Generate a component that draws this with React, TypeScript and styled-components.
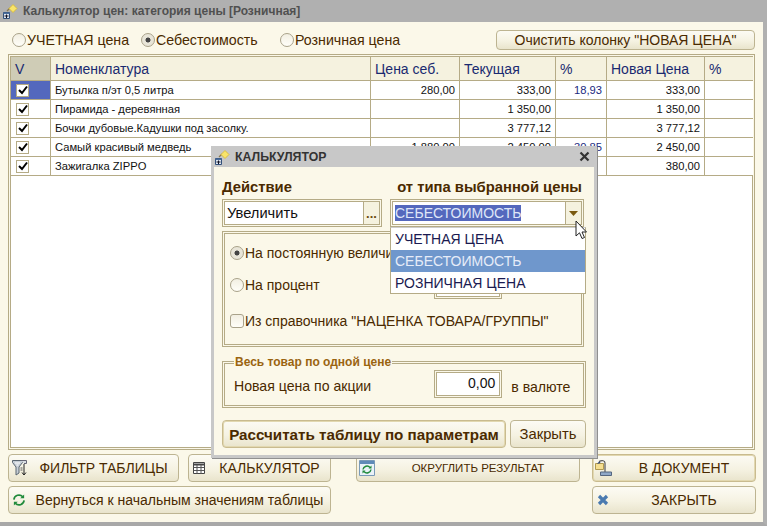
import React from 'react';
import styled, { createGlobalStyle } from 'styled-components';

const Global = createGlobalStyle`
  html, body { margin: 0; padding: 0; background: #fbf8e9; }
  body { font-family: "Liberation Sans", Arial, sans-serif; font-size: 14px; color: #4a2a00; }
  * { box-sizing: border-box; }
`;

const Win = styled.div`
  position: relative;
  width: 767px;
  height: 526px;
  display: flex;
  flex-direction: column;
  background: #fbf8e9;
  border-right: 4px solid #b0b0b0;
  border-bottom: 4px solid #a8a8a8;
  overflow: hidden;
`;
const TitleBar = styled.div`
  height: 22px;
  flex: none;
  background: #b0b0b0;
  display: flex;
  align-items: center;
  gap: 2px;
  padding-left: 1px;
  margin-right: -4px;
  font-weight: bold;
  font-size: 12px;
  color: #505050;
`;
const TopRow = styled.div`
  height: 32px;
  flex: none;
  display: flex;
  align-items: center;
  padding: 3px 8px 0 12px;
`;
const RadioItem = styled.label<{ $w: number }>`
  width: ${(p) => p.$w}px;
  display: flex;
  align-items: center;
  font-size: 14.2px;
  color: #4a2a00;
  white-space: nowrap;
`;
const Circle = styled.span<{ $on?: boolean }>`
  width: 14px;
  height: 14px;
  flex: none;
  margin-right: 1px;
  border-radius: 50%;
  border: 1px solid #a9a28a;
  background: ${(p) => (p.$on
    ? 'radial-gradient(circle, #444 0 2.2px, #e8e5d8 2.8px)'
    : 'linear-gradient(#f2efe2, #fffef8)')};
`;
const Btn = styled.button<{ $w?: number; $h?: number; $size?: number; $bold?: boolean; $hot?: boolean }>`
  width: ${(p) => (p.$w ? `${p.$w}px` : 'auto')};
  height: ${(p) => p.$h ?? 28}px;
  flex: none;
  padding: 0;
  display: flex;
  align-items: center;
  justify-content: center;
  border-radius: 4px;
  border: 1px solid ${(p) => (p.$hot ? '#c9bb8f' : '#bdb491')};
  box-shadow: ${(p) => (p.$hot ? 'inset 0 0 0 1px #e2d8b0' : 'none')};
  background: linear-gradient(#fcfbf4 0%, #f5f2e2 55%, #e9e4cc 100%);
  font-family: inherit;
  font-size: ${(p) => p.$size ?? 14}px;
  font-weight: ${(p) => (p.$bold ? 'bold' : 'normal')};
  color: #4a2a00;
  white-space: nowrap;
`;
const ClearBtn = styled(Btn)`
  margin-left: auto;
  width: 259px;
`;
const TableBox = styled.div`
  flex: 1;
  margin: 0 8px;
  border: 1px solid #b5ab86;
  padding: 1px;
  min-height: 0;
`;
const TableInner = styled.div`
  height: 100%;
  background: #fff;
  border: 1px solid #b5ab86;
`;
const Row = styled.div<{ $head?: boolean }>`
  display: grid;
  grid-template-columns: 40px 320px 89px 96px 51px 98px 48px;
  height: ${(p) => (p.$head ? 24 : 19)}px;
  border-bottom: 1px solid #b5ab86;
`;
const Head = styled.div<{ $dark?: boolean }>`
  background: ${(p) => (p.$dark ? '#cfccb6' : '#f5f2df')};
  border-right: 1px solid #b5ab86;
  color: #1a2a70;
  font-size: 14px;
  display: flex;
  align-items: center;
  padding-left: 4px;
  &:last-child { border-right: none; }
`;
const Cell = styled.div<{ $right?: boolean; $blue?: boolean; $sel?: boolean }>`
  border-right: 1px solid #b5ab86;
  font-size: 11.2px;
  color: ${(p) => (p.$blue ? '#1a2a80' : '#111')};
  background: ${(p) => (p.$sel ? '#5468bd' : '#fff')};
  display: flex;
  align-items: center;
  justify-content: ${(p) => (p.$right ? 'flex-end' : 'flex-start')};
  padding: 0 4px;
  white-space: nowrap;
  &:last-child { border-right: none; }
`;
const Check = styled.span`
  width: 13px;
  height: 13px;
  margin-left: 1px;
  background: #fff;
  border: 1px solid #b5ab86;
  display: inline-flex;
  align-items: center;
  justify-content: center;
  flex: none;
`;
const Footer = styled.div`
  flex: none;
  height: 72px;
  padding: 4px 0 0 8px;
  display: grid;
  grid-template-columns: 171px 9px 143px 25px 224px 12px 164px;
  grid-template-rows: 28px 28px;
  row-gap: 4px;
`;
const FootBtn = styled(Btn)<{ $col: string }>`
  grid-column: ${(p) => p.$col};
  width: 100%;
  justify-content: flex-start;
`;
const FootIcon = styled.span`
  width: 18px;
  height: 20px;
  flex: none;
  margin-left: 1px;
  display: flex;
  align-items: center;
  justify-content: center;
`;
const FootLabel = styled.span<{ $size?: number }>`
  flex: 1;
  text-align: center;
  font-size: ${(p) => p.$size ?? 14}px;
  margin-left: 7px;
  padding-right: 6px;
`;

/* dialog */
const Dialog = styled.div`
  position: absolute;
  left: 211px;
  top: 146px;
  width: 386px;
  height: 312px;
  background: #fbf8e9;
  border: 3px solid #c8c8c8;
  border-top: none;
  box-shadow: 1px 1px 0 #909090;
  display: flex;
  flex-direction: column;
`;
const DlgTitle = styled.div`
  height: 21px;
  flex: none;
  margin: 0 -3px;
  padding: 0 7px 0 2px;
  background: #c8c8c8;
  display: flex;
  align-items: center;
  gap: 2px;
  font-weight: bold;
  font-size: 12.3px;
  color: #333;
`;
const Close = styled.span`
  margin-left: auto;
  display: flex;
`;
const DlgBody = styled.div`
  padding: 0 8px;
  flex: 1;
  display: flex;
  flex-direction: column;
  position: relative;
`;
const LabelRow = styled.div`
  height: 32px;
  flex: none;
  display: flex;
  justify-content: space-between;
  align-items: flex-end;
  padding: 0 4px 4px 0;
  font-weight: bold;
  font-size: 14.8px;
  color: #4a2a00;
`;
const FieldRow = styled.div`
  display: flex;
  gap: 8px;
  height: 28px;
  flex: none;
`;
const DoubleBox = styled.div<{ $w: number; $h?: number; $ml?: number }>`
  width: ${(p) => p.$w}px;
  height: ${(p) => (p.$h ? `${p.$h}px` : '100%')};
  margin-left: ${(p) => p.$ml ?? 0}px;
  flex: none;
  border: 1px solid #b5ab86;
  padding: 1px;
`;
const InputIn = styled.div`
  height: 100%;
  display: flex;
  align-items: center;
  border: 1px solid #b5ab86;
  background: #fff;
  font-size: 14px;
  color: #111;
`;
const InputText = styled.span<{ $sel?: boolean }>`
  margin-left: 2px;
  font-size: ${(p) => (p.$sel ? 14 : 14.7)}px;
  color: ${(p) => (p.$sel ? '#dfe6f8' : '#111')};
  background: ${(p) => (p.$sel ? '#5468bd' : 'transparent')};
  line-height: 16px;
`;
const EndBtn = styled.span`
  margin-left: auto;
  width: 16px;
  height: 100%;
  background: #f5f2df;
  border-left: 1px solid #b5ab86;
  display: flex;
  align-items: center;
  justify-content: center;
  color: #6a4a10;
  font-size: 13px;
  font-weight: bold;
`;
const Panel = styled.div`
  margin-top: 4px;
  height: 116px;
  flex: none;
  width: 362px;
  border: 1px solid #b5ab86;
  padding: 1px;
`;
const PanelIn = styled.div`
  height: 100%;
  border: 1px solid #b5ab86;
  padding: 9px 5px 0 5px;
  display: flex;
  flex-direction: column;
`;
const PanelRow = styled.div<{ $h: number }>`
  height: ${(p) => p.$h}px;
  flex: none;
  display: flex;
  align-items: center;
  font-size: 14px;
  color: #4a2a00;
  white-space: nowrap;
`;
const RadioLabel = styled.span`
  display: flex;
  align-items: center;
  flex: none;
`;
const RadioCol = styled(RadioLabel)`
  width: 204px;
`;
const Square = styled.span`
  width: 14px;
  height: 14px;
  flex: none;
  margin-right: 1px;
  border: 1px solid #a9a28a;
  border-radius: 3px;
  background: linear-gradient(#f2efe2, #fffef8);
`;
const Group = styled.fieldset`
  margin: 9px 0 0 0;
  padding: 0 5px 0 9px;
  width: 364px;
  height: 52px;
  flex: none;
  border: 3px double #b5ab86;
  display: flex;
`;
const Legend = styled.legend`
  padding: 0 1px;
  font-size: 12px;
  font-weight: bold;
  color: #9a6410;
  line-height: 13px;
`;
const GroupRow = styled.div`
  display: flex;
  align-items: center;
  width: 100%;
  height: 28px;
  margin-top: 1px;
  font-size: 14.1px;
  color: #4a2a00;
`;
const GroupLabel = styled.span`
  margin-top: 4px;
`;
const Currency = styled.span`
  margin: 6px 0 0 9px;
`;
const NumIn = styled(InputIn)`
  justify-content: flex-end;
  padding: 0 4px 3px 0;
`;
const DlgButtons = styled.div`
  margin-top: 12px;
  display: flex;
  gap: 4px;
`;
const Dropdown = styled.div`
  position: absolute;
  left: 176px;
  top: 60px;
  width: 196px;
  height: 67px;
  background: #fff;
  border: 1px solid #b5ab86;
  border-top-color: #ccc;
  font-size: 14px;
`;
const DropItem = styled.div<{ $sel?: boolean }>`
  height: 22px;
  display: flex;
  align-items: center;
  padding-left: 4px;
  color: ${(p) => (p.$sel ? '#e6ecf8' : '#1a1a50')};
  background: ${(p) => (p.$sel ? '#6f97cc' : 'transparent')};
`;
const Cursor = styled.svg`
  position: absolute;
  left: 361px;
  top: 53px;
`;

const FormIcon = () => (
  <svg width="20" height="20" viewBox="0 0 20 20">
    <path d="M2.500 11.500h6v6h-6z" fill="#dfe8f4" stroke="#33507a" />
    <path d="M2.500 11.500h6v1.500h-6z" fill="#4a6d9c" />
    <path d="M3.500 15h4M5.500 13.500v3.500" stroke="#112" />
    <path d="M6 10l3-3" stroke="#8a7a50" strokeWidth="1.200" />
    <path d="M12 3.500l4 4-4 4-4-4z" fill="#f8e46a" stroke="#d8b830" strokeWidth=".8" />
  </svg>
);
const Tick = () => (
  <svg width="10" height="10" viewBox="0 0 10 10">
    <path d="M1 5l3 3 5-6.500" fill="none" stroke="#000" strokeWidth="2" />
  </svg>
);
const Funnel = () => (
  <svg width="18" height="16" viewBox="-2 0 18 16">
    <path d="M.5.500h10v2L7 7v6l-3 2V7L.5 2.500z" fill="#c6ced6" stroke="#5a6670" />
    <path d="M3 3h5M4.500 5h2" stroke="#fff" />
    <path d="M9 .500h5.500v3H12" fill="#d8dde2" stroke="#667" />
    <path d="M12 4v11M10 12.500l2 2.500 2-2.500" fill="none" stroke="#222" />
    <path d="M8.500 8h2M8.500 10h2" stroke="#555" />
  </svg>
);
const Calc = () => (
  <svg width="12" height="12" viewBox="0 0 12 12">
    <path d="M.5.500h11v11H.5z" fill="#fff" stroke="#444" />
    <path d="M.5 2.500h11" stroke="#444" strokeWidth="2" />
    <path d="M.5 5.500h11M.5 8.500h11M4 3v9M8 3v9" stroke="#555" />
  </svg>
);
const Arrows = () => (
  <svg width="14" height="14" viewBox="0 0 15 15">
    <path d="M2 7a5.500 5.500 0 0 1 9.500-3" fill="none" stroke="#1f8a3a" strokeWidth="1.800" />
    <path d="M13 1.500v4.200H8.800z" fill="#1f8a3a" />
    <path d="M13 8a5.500 5.500 0 0 1-9.500 3" fill="none" stroke="#1f8a3a" strokeWidth="1.800" />
    <path d="M2 13.500V9.300h4.200z" fill="#1f8a3a" />
  </svg>
);
const RoundIcon = () => (
  <svg width="16" height="16" viewBox="0 0 16 16">
    <path d="M.5.500h15v15H.5z" fill="#eaf2f8" stroke="#7a9ab8" />
    <path d="M1 1h14v3H1z" fill="#5f8ab8" />
    <path d="M4 9.500a4 4 0 0 1 7-2M12 9.500a4 4 0 0 1-7 2" fill="none" stroke="#1f8a3a" strokeWidth="1.500" />
    <path d="M12.500 5.500v3h-3zM3.500 13.500v-3h3z" fill="#1f8a3a" />
  </svg>
);
const DocIcon = () => (
  <svg width="17" height="16" viewBox="0 0 17 16">
    <path d="M.5 3.500h8v6h-8z" fill="#f6df90" stroke="#b09a50" />
    <path d="M2 4l2.500-3 1 2z" fill="#304880" />
    <path d="M4 1.500C7 0 10 .5 10 3v9" fill="none" stroke="#555" strokeWidth="1.200" />
    <path d="M5.500 12h11v3.500h-11z" fill="#8fa8c8" stroke="#556680" />
  </svg>
);
const CloseIcon = () => (
  <svg width="12" height="12" viewBox="0 0 12 12">
    <path d="M2 2l8 8M10 2l-8 8" stroke="#4a7ab0" strokeWidth="3.200" />
  </svg>
);
const DlgX = () => (
  <svg width="11" height="11" viewBox="0 0 11 11">
    <path d="M1.500 1.500l8 8M9.500 1.500l-8 8" stroke="#333" strokeWidth="2.200" />
  </svg>
);
const Tri = () => (
  <svg width="9" height="5" viewBox="0 0 9 5"><path d="M0 0h9L4.500 5z" fill="#7a5a10" /></svg>
);

type Item = { name: string; cost?: string; cur: string; pct?: string; price: string };
const items: Item[] = [
  { name: 'Бутылка п/эт 0,5 литра', cost: '280,00', cur: '333,00', pct: '18,93', price: '333,00' },
  { name: 'Пирамида - деревянная', cur: '1 350,00', price: '1 350,00' },
  { name: 'Бочки дубовые.Кадушки под засолку.', cur: '3 777,12', price: '3 777,12' },
  { name: 'Самый красивый медведь', cost: '1 880,00', cur: '2 450,00', pct: '30,85', price: '2 450,00' },
  { name: 'Зажигалка ZIPPO', cur: '380,00', price: '380,00' },
];

export default function App() {
  return (
    <Win>
      <Global />
      <TitleBar><FormIcon />Калькулятор цен: категория цены [Розничная]</TitleBar>
      <TopRow>
        <RadioItem $w={129}><Circle />УЧЕТНАЯ цена</RadioItem>
        <RadioItem $w={139}><Circle $on />Себестоимость</RadioItem>
        <RadioItem $w={150}><Circle />Розничная цена</RadioItem>
        <ClearBtn $h={20}>Очистить колонку "НОВАЯ ЦЕНА"</ClearBtn>
      </TopRow>
      <TableBox>
        <TableInner>
          <Row $head>
            <Head $dark>V</Head>
            <Head>Номенклатура</Head>
            <Head>Цена себ.</Head>
            <Head>Текущая</Head>
            <Head>%</Head>
            <Head>Новая Цена</Head>
            <Head>%</Head>
          </Row>
          {items.map((it, i) => (
            <Row key={it.name}>
              <Cell $sel={i === 0}><Check><Tick /></Check></Cell>
              <Cell>{it.name}</Cell>
              <Cell $right>{it.cost}</Cell>
              <Cell $right>{it.cur}</Cell>
              <Cell $right $blue>{it.pct}</Cell>
              <Cell $right>{it.price}</Cell>
              <Cell />
            </Row>
          ))}
        </TableInner>
      </TableBox>
      <Footer>
        <FootBtn $col="1"><FootIcon><Funnel /></FootIcon><FootLabel>ФИЛЬТР ТАБЛИЦЫ</FootLabel></FootBtn>
        <FootBtn $col="3"><FootIcon><Calc /></FootIcon><FootLabel>КАЛЬКУЛЯТОР</FootLabel></FootBtn>
        <FootBtn $col="5"><FootIcon><RoundIcon /></FootIcon><FootLabel $size={11.5}>ОКРУГЛИТЬ РЕЗУЛЬТАТ</FootLabel></FootBtn>
        <FootBtn $col="7" $hot><FootIcon><DocIcon /></FootIcon><FootLabel>В ДОКУМЕНТ</FootLabel></FootBtn>
        <FootBtn $col="1 / 4"><FootIcon><Arrows /></FootIcon><FootLabel>Вернуться к начальным значениям таблицы</FootLabel></FootBtn>
        <FootBtn $col="7"><FootIcon><CloseIcon /></FootIcon><FootLabel>ЗАКРЫТЬ</FootLabel></FootBtn>
      </Footer>

      <Dialog>
        <DlgTitle><FormIcon />КАЛЬКУЛЯТОР<Close><DlgX /></Close></DlgTitle>
        <DlgBody>
          <LabelRow><span>Действие</span><span>от типа выбранной цены</span></LabelRow>
          <FieldRow>
            <DoubleBox $w={160}>
              <InputIn><InputText>Увеличить</InputText><EndBtn>...</EndBtn></InputIn>
            </DoubleBox>
            <DoubleBox $w={194}>
              <InputIn><InputText $sel>СЕБЕСТОИМОСТЬ</InputText><EndBtn><Tri /></EndBtn></InputIn>
            </DoubleBox>
          </FieldRow>
          <Panel>
            <PanelIn>
              <PanelRow $h={20}>
                <RadioCol><Circle $on />На постоянную величину</RadioCol>
              </PanelRow>
              <PanelRow $h={44}>
                <RadioCol><Circle />На процент</RadioCol>
                <DoubleBox $w={68} $h={28}><NumIn /></DoubleBox>
              </PanelRow>
              <PanelRow $h={28}>
                <RadioLabel><Square />Из справочника "НАЦЕНКА ТОВАРА/ГРУППЫ"</RadioLabel>
              </PanelRow>
            </PanelIn>
          </Panel>
          <Group>
            <Legend>Весь товар по одной цене</Legend>
            <GroupRow>
              <GroupLabel>Новая цена по акции</GroupLabel>
              <DoubleBox $w={68} $h={28} $ml={63}>
                <NumIn>0,00</NumIn>
              </DoubleBox>
              <Currency>в валюте</Currency>
            </GroupRow>
          </Group>
          <DlgButtons>
            <Btn $w={284} $size={15.2} $bold $hot>Рассчитать таблицу по параметрам</Btn>
            <Btn $w={76} $size={14.8}>Закрыть</Btn>
          </DlgButtons>
          <Dropdown>
            <DropItem>УЧЕТНАЯ ЦЕНА</DropItem>
            <DropItem $sel>СЕБЕСТОИМОСТЬ</DropItem>
            <DropItem>РОЗНИЧНАЯ ЦЕНА</DropItem>
          </Dropdown>
          <Cursor width="13" height="20" viewBox="0 0 13 20">
            <path d="M1 1v15l3.500-3.200L7 18.500l2.500-1L7 12h4.500z" fill="#fff" stroke="#222" />
          </Cursor>
        </DlgBody>
      </Dialog>
    </Win>
  );
}
